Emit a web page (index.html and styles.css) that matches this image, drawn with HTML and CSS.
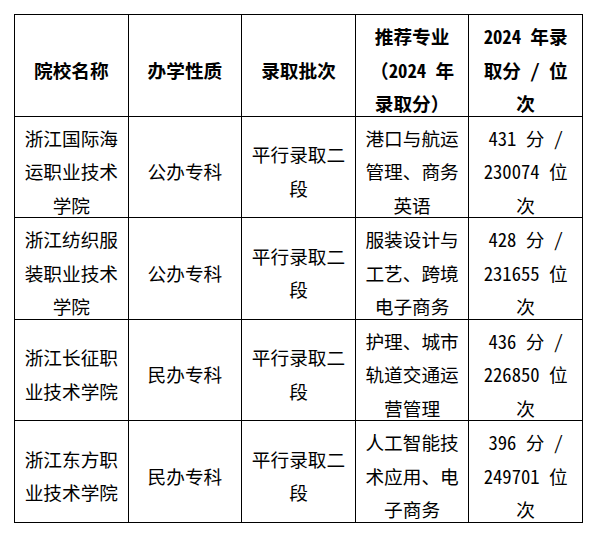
FILE: index.html
```html
<!DOCTYPE html>
<html lang="zh-CN">
<head>
<meta charset="utf-8">
<title>院校推荐</title>
<link rel="stylesheet" href="styles.css">
</head>
<body>
<table class="grid">
  <colgroup>
    <col class="col"><col class="col"><col class="col"><col class="col"><col class="col">
  </colgroup>
  <thead>
    <tr>
      <th><div class="c">院校名称</div></th>
      <th><div class="c">办学性质</div></th>
      <th><div class="c">录取批次</div></th>
      <th><div class="c">推荐专业<br><span class="fw">（</span>2024 年<br>录取分<span class="fw">）</span></div></th>
      <th><div class="c">2024 年录<br>取分 / 位<br>次</div></th>
    </tr>
  </thead>
  <tbody>
    <tr>
      <td><div class="c">浙江国际海<br>运职业技术<br>学院</div></td>
      <td><div class="c">公办专科</div></td>
      <td><div class="c">平行录取二<br>段</div></td>
      <td><div class="c">港口与航运<br>管理、商务<br>英语</div></td>
      <td><div class="c">431 分 /<br>230074 位<br>次</div></td>
    </tr>
    <tr>
      <td><div class="c">浙江纺织服<br>装职业技术<br>学院</div></td>
      <td><div class="c">公办专科</div></td>
      <td><div class="c">平行录取二<br>段</div></td>
      <td><div class="c">服装设计与<br>工艺、跨境<br>电子商务</div></td>
      <td><div class="c">428 分 /<br>231655 位<br>次</div></td>
    </tr>
    <tr>
      <td><div class="c">浙江长征职<br>业技术学院</div></td>
      <td><div class="c">民办专科</div></td>
      <td><div class="c">平行录取二<br>段</div></td>
      <td><div class="c">护理、城市<br>轨道交通运<br>营管理</div></td>
      <td><div class="c">436 分 /<br>226850 位<br>次</div></td>
    </tr>
    <tr>
      <td><div class="c">浙江东方职<br>业技术学院</div></td>
      <td><div class="c">民办专科</div></td>
      <td><div class="c">平行录取二<br>段</div></td>
      <td><div class="c">人工智能技<br>术应用、电<br>子商务</div></td>
      <td><div class="c">396 分 /<br>249701 位<br>次</div></td>
    </tr>
  </tbody>
</table>
</body>
</html>
```

FILE: styles.css
```css
html, body {
  margin: 0;
  padding: 0;
  background: #fff;
}
body {
  padding: 14px 0 0 14px;
  font-family: "Noto Sans CJK SC", "Noto Sans", sans-serif;
  font-size: 18.67px;
  color: #000;
}
.grid {
  border-collapse: collapse;
  table-layout: fixed;
  width: 569px;
}
.col {
  width: 20%;
}
.grid th,
.grid td {
  border: 1px solid #000;
  padding: 0 5px;
  text-align: center;
  vertical-align: middle;
  line-height: 33.5px;
  white-space: nowrap;
  font-feature-settings: "hwid" 1;
}
.grid th {
  font-weight: bold;
}
.grid td {
  font-weight: normal;
}
.c {
  padding-top: 4px;
  margin-bottom: -4px;
}
.fw {
  font-feature-settings: normal;
}
```
